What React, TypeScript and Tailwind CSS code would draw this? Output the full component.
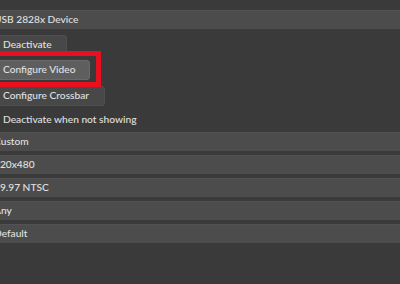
import React from "react";

const Row = ({ text, className = "" }: { text: string; className?: string }) => (
  <div
    className={`h-[19px] w-[420px] -ml-[8px] bg-[#4c4c4c] border-t border-[#525252] flex items-center pl-[2px] text-[#e0e0e0] ${className}`}
  >
    {text}
  </div>
);

const Btn = ({ text, w, light, className = "" }: { text: string; w: number; light?: boolean; className?: string }) => (
  <div
    className={`h-[20px] -ml-[8px] rounded-[3px] flex items-center pl-[10px] text-[#e0e0e0] border ${
      light ? "bg-[#5e5e5e] border-[#6a6a6a]" : "bg-[#484848] border-[#4f4f4f]"
    } ${className}`}
    style={{ width: w + 8 }}
  >
    {text}
  </div>
);

export default function App() {
  return (
    <div
      className="relative w-[400px] h-[284px] overflow-hidden bg-[#3b3a3b] text-[10.2px] font-medium"
      style={{ fontFamily: 'Lato, "Noto Sans", sans-serif' }}
    >
      <div className="flex flex-col pt-[10px]">
        <Row text="USB 2828x Device" />
        <Btn text="Deactivate" w={67} className="mt-[6px]" />
        <Btn text="Configure Video" w={90} light className="mt-[5px] h-[19px]" />
        <Btn text="Configure Crossbar" w={105} className="mt-[6px] h-[19px]" />
        <div className="h-[19px] mt-[4px] flex items-center pl-[3px] text-[#e0e0e0]">
          Deactivate when not showing
        </div>
        <Row text="Custom" className="mt-[3px]" />
        <Row text="720x480" className="mt-[4px]" />
        <Row text="29.97 NTSC" className="mt-[4px]" />
        <Row text="Any" className="mt-[4px]" />
        <Row text="Default" className="mt-[4px]" />
      </div>
      <div className="absolute left-[-10px] top-[51px] w-[111px] h-[36px] border-[5px] border-[#e8101e]" />
    </div>
  );
}
